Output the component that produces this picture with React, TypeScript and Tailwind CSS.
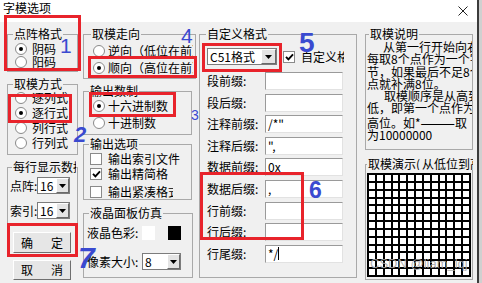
import React from "react";

const FONT = "font-['Noto_Sans_CJK_SC',sans-serif]";

function Group({
  label,
  className = "",
  legend = "ml-[5px]",
  children,
}: {
  label: React.ReactNode;
  className?: string;
  legend?: string;
  children?: React.ReactNode;
}) {
  return (
    <fieldset className={`border border-[#a9a9a9] min-w-0 ${className}`}>
      <legend className={`px-[1px] h-[12px] leading-[12px] whitespace-nowrap overflow-hidden ${legend}`}>
        {label}
      </legend>
      {children}
    </fieldset>
  );
}

function Radio({ checked }: { checked?: boolean }) {
  return (
    <span className="w-[12px] h-[12px] shrink-0 rounded-full bg-white border border-[#8a8a8a] flex items-center justify-center">
      {checked && <span className="w-[4px] h-[4px] rounded-full bg-black" />}
    </span>
  );
}

function Check({ checked, className = "" }: { checked?: boolean; className?: string }) {
  return (
    <span
      className={`w-[12px] h-[12px] shrink-0 bg-white border border-[#8a8a8a] flex items-center justify-center ${className}`}
    >
      {checked && (
        <svg width="9" height="8" viewBox="0 0 9 8">
          <path d="M1 3.8 L3.4 6.3 L8 1.3" stroke="#000" strokeWidth="1.9" fill="none" />
        </svg>
      )}
    </span>
  );
}

function Combo({ value, className = "", btn = "w-[13px]" }: { value: string; className?: string; btn?: string }) {
  return (
    <div className={`h-[17px] shrink-0 bg-white border border-[#7c7c7c] flex ${className}`}>
      <span className="flex-1 pl-[2px] leading-[15px] overflow-hidden whitespace-nowrap">{value}</span>
      <span
        className={`${btn} shrink-0 bg-[#e4e4e4] border border-t-white border-l-white border-b-[#6a6a6a] border-r-[#6a6a6a] flex items-center justify-center`}
      >
        <svg width="7" height="4" viewBox="0 0 7 4">
          <path d="M0 0H7L3.5 4Z" fill="#000" />
        </svg>
      </span>
    </div>
  );
}

function Field({ children }: { children?: React.ReactNode }) {
  return (
    <div className="w-[78px] h-[18px] shrink-0 bg-white border border-[#9a9a9a] border-r-[#e2e2e2] border-b-[#e2e2e2] pl-[2px] leading-[16px] whitespace-nowrap overflow-hidden flex items-center">
      {children}
    </div>
  );
}

function Btn({ a, b, className = "" }: { a: string; b: string; className?: string }) {
  return (
    <div
      className={`ml-[6px] w-[58px] bg-[#e6e6e6] border border-t-white border-l-white border-b-[#6f6f6f] border-r-[#6f6f6f] flex items-center justify-center gap-[18px] ${className}`}
    >
      <span>{a}</span>
      <span>{b}</span>
    </div>
  );
}

function Red({ className }: { className: string }) {
  return <div className={`absolute border-[3px] border-[#e8232b] ${className}`} />;
}

function Num({ n, className }: { n: string; className: string }) {
  return (
    <div className={`absolute leading-none text-[#3a4ad0] font-['Liberation_Sans',sans-serif] ${className}`}>{n}</div>
  );
}

const cells = Array.from({ length: 169 }, (_, i) => i);

const fields: { label: string; value?: React.ReactNode }[] = [
  { label: "段前缀:" },
  { label: "段后缀:" },
  { label: "注释前缀:", value: "/*\"" },
  { label: "注释后缀:", value: "\"," },
  { label: "数据前缀:", value: "0x" },
  { label: "数据后缀:", value: "," },
  { label: "行前缀:" },
  { label: "行后缀:" },
  {
    label: "行尾缀:",
    value: (
      <>
        */<span className="inline-block w-[1px] h-[13px] bg-black" />
      </>
    ),
  },
];

export default function App() {
  return (
    <div className={`relative w-[482px] h-[283px] overflow-hidden flex text-[12px] text-black ${FONT}`}>
      <div className="w-[477px] h-full flex flex-col bg-[#f0f0f0]">
        {/* title bar */}
        <div className="h-[22px] bg-white flex justify-between shrink-0">
          <span className="pl-[3px] pt-[2px] leading-[12px]">字模选项</span>
          <svg className="mt-[6px] mr-[9px]" width="10" height="10" viewBox="0 0 10 10">
            <path d="M0.5 0.5L9.5 9.5M9.5 0.5L0.5 9.5" stroke="#222" strokeWidth="1" />
          </svg>
        </div>

        {/* body */}
        <div className="flex pl-[7px] pt-[6px]">
          {/* column 1 */}
          <div className="w-[71px] shrink-0 flex flex-col">
            <Group label="点阵格式" className="h-[44px]">
              <div className="mt-[2px] pl-[7px] flex flex-col">
                <div className="h-[13px] flex items-center gap-[5px]">
                  <Radio checked />
                  <span>阴码</span>
                </div>
                <div className="h-[13px] flex items-center gap-[5px]">
                  <Radio />
                  <span>阳码</span>
                </div>
              </div>
            </Group>
            <Group label="取模方式" className="h-[77px] mt-[6px]">
              <div className="pl-[7px] flex flex-col">
                {["逐列式", "逐行式", "列行式", "行列式"].map((t, i) => (
                  <div key={t} className="h-[15px] flex items-center gap-[5px]">
                    <Radio checked={i === 1} />
                    <span>{t}</span>
                  </div>
                ))}
              </div>
            </Group>
            <Group label="每行显示数据" className="h-[64px] mt-[6px]" legend="ml-[4px] max-w-[64px]">
              <div className="mt-[4px] pl-[2px] flex flex-col gap-[8px]">
                <div className="h-[17px] flex items-center">
                  <span className="w-[27px] shrink-0 whitespace-nowrap">点阵:</span>
                  <Combo value="16" className="w-[33px]" />
                </div>
                <div className="h-[17px] flex items-center">
                  <span className="w-[27px] shrink-0 whitespace-nowrap">索引:</span>
                  <Combo value="16" className="w-[33px]" />
                </div>
              </div>
            </Group>
            <Btn a="确" b="定" className="mt-[7px] h-[21px]" />
            <Btn a="取" b="消" className="mt-[7px] h-[20px]" />
          </div>

          {/* column 2 */}
          <div className="ml-[5px] w-[113px] shrink-0 flex flex-col">
            <Group label="取模走向" className="h-[51px]" legend="ml-[7px]">
              <div className="mt-[2px] pl-[9px] flex flex-col">
                <div className="h-[17px] flex items-center gap-[3px]">
                  <Radio />
                  <span className="w-[85px] overflow-hidden whitespace-nowrap">逆向（低位在前）</span>
                </div>
                <div className="h-[17px] flex items-center gap-[3px]">
                  <Radio checked />
                  <span className="w-[85px] overflow-hidden whitespace-nowrap">顺向（高位在前）</span>
                </div>
              </div>
            </Group>
            <Group label="输出数制" className="w-[109px] h-[50px] mt-[6px]">
              <div className="pl-[9px] flex flex-col">
                <div className="h-[17px] flex items-center gap-[3px]">
                  <Radio checked />
                  <span className="whitespace-nowrap">十六进制数</span>
                </div>
                <div className="h-[17px] flex items-center gap-[3px]">
                  <Radio />
                  <span className="whitespace-nowrap">十进制数</span>
                </div>
              </div>
            </Group>
            <Group label="输出选项" className="w-[109px] h-[62px] mt-[3px]">
              <div className="pl-[6px] flex flex-col">
                <div className="mt-[1px] h-[15px] flex items-center gap-[6px]">
                  <Check />
                  <span className="whitespace-nowrap">输出索引文件</span>
                </div>
                <div className="h-[15px] flex items-center gap-[6px]">
                  <Check checked />
                  <span className="w-[60px] overflow-hidden whitespace-nowrap">输出精简格式</span>
                </div>
                <div className="mt-[3px] h-[15px] flex items-center gap-[6px]">
                  <Check />
                  <span className="w-[65px] overflow-hidden whitespace-nowrap">输出紧凑格式</span>
                </div>
              </div>
            </Group>
            <Group label="液晶面板仿真" className="w-[110px] h-[71px] mt-[7px]">
              <div className="mt-[7px] pl-[3px] h-[14px] flex items-center">
                <span className="w-[55px] shrink-0 whitespace-nowrap">液晶色彩:</span>
                <span className="w-[13px] h-[14px] bg-white" />
                <span className="ml-[13px] w-[13px] h-[14px] bg-black" />
              </div>
              <div className="mt-[13px] pl-[3px] h-[17px] flex items-center">
                <span className="w-[55px] shrink-0 whitespace-nowrap">像素大小:</span>
                <Combo value="8" className="w-[39px]" />
              </div>
            </Group>
          </div>

          {/* column 3 */}
          <div className="ml-[3px] w-[158px] shrink-0">
            <Group label="自定义格式" className="h-[250px]" legend="ml-[6px]">
              <div className="mt-[8px] pl-[7px] h-[17px] flex items-center">
                <Combo value="C51格式" className="w-[70px]" btn="w-[15px]" />
                <Check checked className="ml-[6px]" />
                <span className="ml-[6px] w-[43px] overflow-hidden whitespace-nowrap">自定义格式</span>
              </div>
              <div className="mt-[7px] pl-[7px] flex flex-col gap-[3.6px]">
                {fields.map((f) => (
                  <div key={f.label} className="h-[18px] flex items-center">
                    <span className="w-[58px] shrink-0 whitespace-nowrap">{f.label}</span>
                    <Field>{f.value}</Field>
                  </div>
                ))}
              </div>
            </Group>
          </div>

          {/* column 4 */}
          <div className="ml-[8px] w-[108px] shrink-0 flex flex-col">
            <Group label="取模说明" className="h-[122px]" legend="ml-[3px]">
              <div className="mt-[1px] pl-[1px] leading-[12.3px] whitespace-nowrap overflow-hidden">
                <div className="pl-[16px]">从第一行开始向右</div>
                <div>每取8个点作为一个字</div>
                <div>节，如果最后不足8个</div>
                <div>点就补满8位。</div>
                <div className="pl-[17px]">取模顺序是从高到</div>
                <div>低，即第一个点作为最</div>
                <div>
                  高位。如*<span className="text-[14px] leading-none">———</span>取
                </div>
                <div>为10000000</div>
              </div>
            </Group>
            <Group
              label={
                <>
                  取模演示<span className="inline-block w-[6px]">(</span>从低位到高位)
                </>
              }
              className="h-[122px] mt-[8px] overflow-hidden"
              legend="ml-[1px] max-w-[106px]"
            >
              <div className="mt-[3px] pl-[1px]">
                <div className="w-[104px] h-[104px] bg-black grid grid-cols-13 gap-[2px] p-[2px]">
                  {cells.map((i) => (
                    <span key={i} className="bg-white" />
                  ))}
                </div>
              </div>
            </Group>
          </div>
        </div>
      </div>

      {/* window behind, right edge */}
      <div className="flex-1 bg-[#d0d0d0] border-l-2 border-[#3c3c3c]" />

      {/* annotation boxes */}
      <Red className="left-[4px] top-[15px] w-[77px] h-[56px]" />
      <Red className="left-[8px] top-[94px] w-[64px] h-[29px]" />
      <Red className="left-[89px] top-[92px] w-[87px] h-[25px]" />
      <Red className="left-[88px] top-[56px] w-[109px] h-[22px]" />
      <Red className="left-[202px] top-[43px] w-[80px] h-[29px]" />
      <Red className="left-[200px] top-[172px] w-[104px] h-[68px]" />
      <Red className="left-[7px] top-[223px] w-[71px] h-[34px]" />

      <Num n="1" className="left-[60px] top-[35px] text-[21px]" />
      <Num n="2" className="left-[74px] top-[124px] text-[22px] font-bold italic" />
      <Num n="3" className="left-[191px] top-[108px] text-[14px]" />
      <Num n="4" className="left-[181px] top-[25px] text-[21px]" />
      <Num n="5" className="left-[299px] top-[29px] text-[28px] font-bold" />
      <Num n="6" className="left-[309px] top-[179px] text-[23px] font-bold" />
      <Num n="7" className="left-[78px] top-[243px] text-[30px] font-bold italic" />

      <div className="absolute left-[370px] top-[257px] text-[13px] leading-none text-[#a8a8a8]/90 font-['Liberation_Sans',sans-serif] whitespace-nowrap">
        CSDN @liam_lqj
      </div>
    </div>
  );
}
